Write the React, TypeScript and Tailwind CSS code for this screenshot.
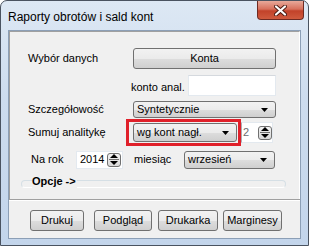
import React from "react";

const font = { fontFamily: '"Liberation Sans", Arial, sans-serif' };

function Arrow() {
  return (
    <svg width="7" height="4" viewBox="0 0 7 4" className="block">
      <path d="M0 0 H7 L3.5 4 Z" fill="#000" />
    </svg>
  );
}

function Spin() {
  return (
    <div className="flex h-[14px] w-[14px] flex-col items-center justify-center gap-[1px] rounded-[3px] border border-[#707070] bg-gradient-to-b from-[#f4f4f4] to-[#d8d8d8]">
      <svg width="8" height="4" viewBox="0 0 8 4" className="block">
        <path d="M0 4 L4 0 L8 4 Z" fill="#000" />
      </svg>
      <div className="h-[1px] w-[10px] bg-[#707070]" />
      <svg width="8" height="4" viewBox="0 0 8 4" className="block">
        <path d="M0 0 H8 L4 4 Z" fill="#000" />
      </svg>
    </div>
  );
}

function Btn({ label, w }: { label: string; w: string }) {
  return (
    <div
      className={`${w} flex h-[21px] items-center justify-center rounded-[3px] border border-[#707070] bg-[linear-gradient(to_bottom,#f2f2f2_0%,#ebebeb_50%,#dddddd_51%,#cfcfcf_100%)] text-[11px] text-black`}
    >
      {label}
    </div>
  );
}

function Select({ label, w, h }: { label: string; w: string; h: string }) {
  return (
    <div
      className={`${w} ${h} flex items-center justify-between rounded-[3px] border border-[#707070] bg-[linear-gradient(to_bottom,#f2f2f2_0%,#ebebeb_50%,#dddddd_51%,#cfcfcf_100%)] pl-[3px] pr-[7px] text-[11px] text-black`}
    >
      <span>{label}</span>
      <Arrow />
    </div>
  );
}

export default function App() {
  return (
    <div style={font} className="h-[246px] w-[309px] overflow-hidden bg-white">
      <div className="flex h-[246px] w-[309px] flex-col rounded-t-[7px] border border-[#4a5360] bg-[linear-gradient(to_bottom,#dde8f4_0%,#cddcee_40%,#c3d5eb_100%)]">
        {/* title bar */}
        <div className="flex h-[29px] items-start justify-between">
          <div className="pl-[7px] pt-[7px] text-[12px] text-black">Raporty obrotów i sald kont</div>
          <div className="mr-[4px] flex h-[19px] w-[47px] items-center justify-center rounded-b-[4px] border border-t-0 border-[#6e2a22] bg-[linear-gradient(to_bottom,#e8a99a_0%,#d7705c_45%,#c2422a_55%,#cf5a3e_100%)]">
            <svg width="13" height="11" viewBox="0 0 13 11">
              <path d="M2 1.5 L11 9.5 M11 1.5 L2 9.5" stroke="#4a1a12" strokeWidth="4" strokeLinecap="round" />
              <path d="M2 1.5 L11 9.5 M11 1.5 L2 9.5" stroke="#ffffff" strokeWidth="2.2" strokeLinecap="round" />
            </svg>
          </div>
        </div>
        {/* client */}
        <div className="mx-[7px] flex h-[209px] flex-col border border-[#8c9fb6] bg-[#f0f0f0]">
          {/* top panel */}
          <div className="flex h-[168px] flex-col border border-b-0 border-[#a0a0a0] border-r-[#ffffff]">
            {/* row 1 */}
            <div className="mt-[16px] flex h-[21px] items-center pl-[18px]">
              <div className="w-[105px] text-[11px]">Wybór danych</div>
              <Btn label="Konta" w="w-[143px]" />
            </div>
            {/* row 2 */}
            <div className="mt-[6px] flex h-[21px] items-end pl-[121px]">
              <div className="w-[57px] pb-[1px] text-[11px]">konto anal.</div>
              <div className="h-[21px] w-[88px] border border-[#e3e9ef] border-t-[#d5d9de] bg-white" />
            </div>
            {/* row 3 */}
            <div className="mt-[5px] flex h-[17px] items-center pl-[18px]">
              <div className="w-[105px] text-[11px]">Szczegółowość</div>
              <Select label="Syntetycznie" w="w-[143px]" h="h-[17px]" />
            </div>
            {/* row 4 */}
            <div className="mt-[1px] flex h-[27px] items-center pl-[18px]">
              <div className="w-[98px] text-[11px]">Sumuj analitykę</div>
              <div className="flex h-[27px] w-[115px] items-center border-[3px] border-[#e0202a] pl-[4px]">
                <Select label="wg kont nagł." w="w-[104px]" h="h-[19px]" />
              </div>
              <div className="flex h-[21px] w-[32px] items-center justify-between border border-l-[#abadb3] border-y-[#e3e9ef] border-r-[#e3e9ef] bg-white pl-[1px] pr-[0px] text-[11px]">
                <span className="text-[#6d6d6d]">2</span>
                <Spin />
              </div>
            </div>
            {/* row 5 */}
            <div className="mt-[5px] flex h-[17px] items-center pl-[21px]">
              <div className="w-[45px] text-[11px]">Na rok</div>
              <div className="flex h-[18px] w-[47px] items-center justify-between border border-[#e3e9ef] bg-white pl-[3px] pr-[1px] text-[11px]">
                <span>2014</span>
                <Spin />
              </div>
              <div className="ml-[11px] w-[50px] text-[11px]">miesiąc</div>
              <Select label="wrzesień" w="w-[91px]" h="h-[18px]" />
            </div>
            {/* row 6 */}
            <div className="relative ml-[11px] mt-[12px] h-[8px] w-[265px] rounded-[4px] border border-[#d5dfe5] border-b-white">
              <div className="absolute left-[10px] top-[-8px] bg-[#f0f0f0] pr-[1px] text-[11px] font-bold">Opcje -&gt;</div>
            </div>
          </div>
          {/* separator */}
          <div className="h-[1px] bg-[#a0a0a0]" />
          <div className="h-[1px] bg-white" />
          {/* buttons */}
          <div className="mt-[9px] flex pl-[21px]">
            <Btn label="Drukuj" w="w-[54px]" />
            <div className="w-[10px]" />
            <Btn label="Podgląd" w="w-[58px]" />
            <div className="w-[6px]" />
            <Btn label="Drukarka" w="w-[60px]" />
            <div className="w-[5px]" />
            <Btn label="Marginesy" w="w-[59px]" />
          </div>
        </div>
      </div>
    </div>
  );
}
